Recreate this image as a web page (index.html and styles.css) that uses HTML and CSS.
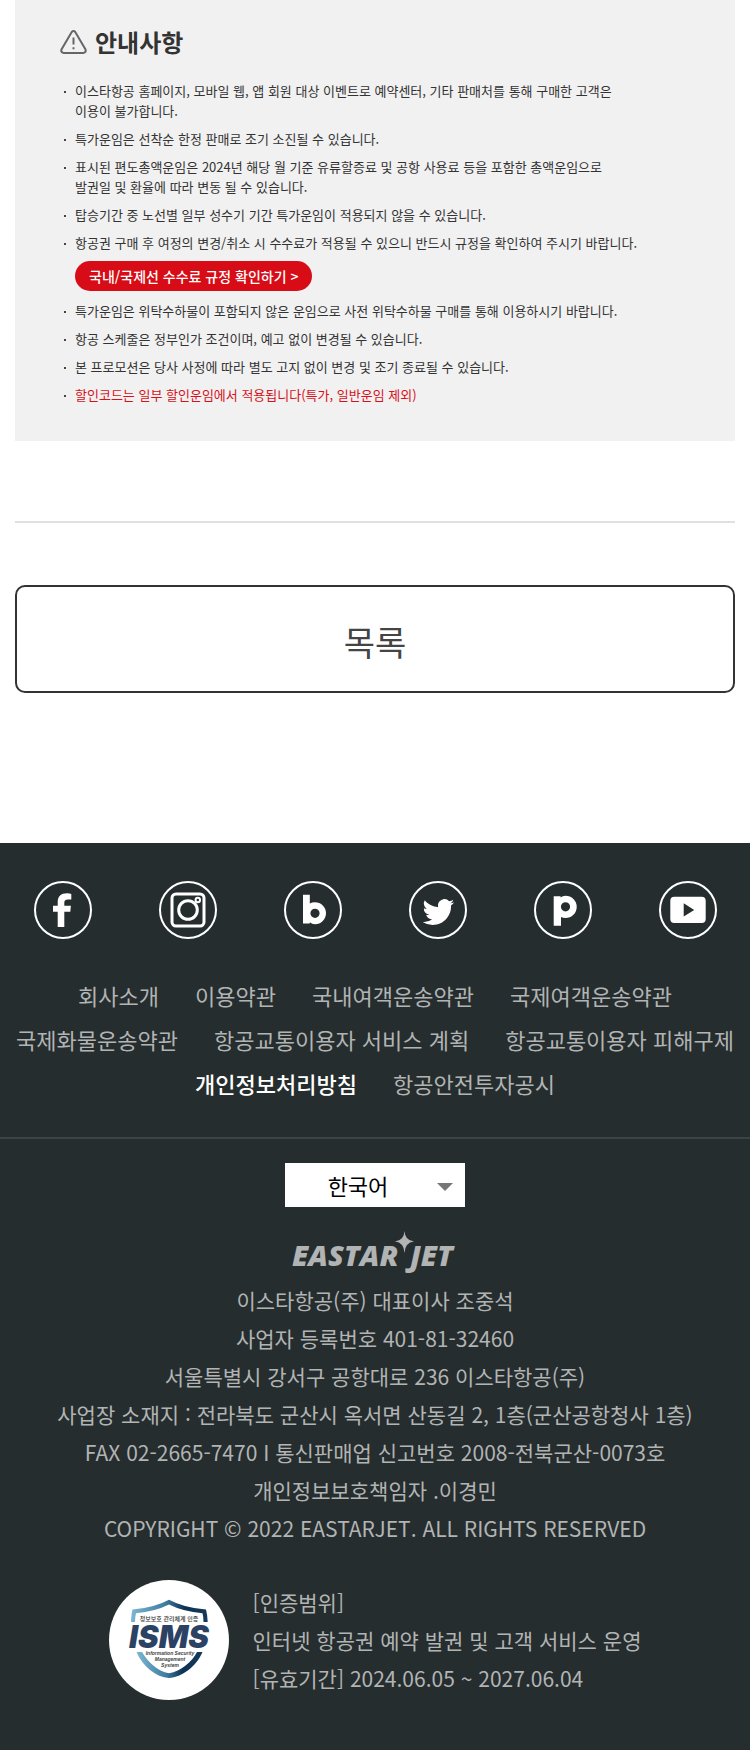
FILE: index.html
```html
<!DOCTYPE html>
<html lang="ko">
<head>
<meta charset="utf-8">
<meta name="viewport" content="width=device-width, initial-scale=1">
<title>이스타항공 이벤트</title>
<link rel="stylesheet" href="styles.css">
</head>
<body>
<main class="content">
  <section class="notice">
    <h2 class="notice-title">
      <svg class="notice-icon" width="27" height="24" viewBox="0 0 27 24" aria-hidden="true">
        <path d="M11.6 2.2Q13.5 0 15.4 2.2L25.4 19.2Q26.6 22.6 23.4 22.9H3.6Q.4 22.6 1.6 19.2Z" fill="none" stroke="#666" stroke-width="2" stroke-linejoin="round"/>
        <path d="M13.5 7.5V14.5M13.5 17.2V19.2" fill="none" stroke="#666" stroke-width="2"/>
      </svg>
      안내사항
    </h2>
    <ul class="notice-list">
      <li>이스타항공 홈페이지, 모바일 웹, 앱 회원 대상 이벤트로 예약센터, 기타 판매처를 통해 구매한 고객은<br>이용이 불가합니다.</li>
      <li>특가운임은 선착순 한정 판매로 조기 소진될 수 있습니다.</li>
      <li>표시된 편도총액운임은 2024년 해당 월 기준 유류할증료 및 공항 사용료 등을 포함한 총액운임으로<br>발권일 및 환율에 따라 변동 될 수 있습니다.</li>
      <li>탑승기간 중 노선별 일부 성수기 기간 특가운임이 적용되지 않을 수 있습니다.</li>
      <li>항공권 구매 후 여정의 변경/취소 시 수수료가 적용될 수 있으니 반드시 규정을 확인하여 주시기 바랍니다.
        <a class="fee-link" href="#">국내/국제선 수수료 규정 확인하기 &gt;</a></li>
      <li>특가운임은 위탁수하물이 포함되지 않은 운임으로 사전 위탁수하물 구매를 통해 이용하시기 바랍니다.</li>
      <li>항공 스케줄은 정부인가 조건이며, 예고 없이 변경될 수 있습니다.</li>
      <li>본 프로모션은 당사 사정에 따라 별도 고지 없이 변경 및 조기 종료될 수 있습니다.</li>
      <li><span class="warn">할인코드는 일부 할인운임에서 적용됩니다(특가, 일반운임 제외)</span></li>
    </ul>
  </section>
  <hr class="divider">
  <button class="list-button" type="button">목록</button>
</main>

<footer class="footer">
  <nav class="social" aria-label="SNS">
    <a href="#" aria-label="Facebook">
      <svg class="social-icon" viewBox="0 0 58 58"><circle class="ring" cx="29" cy="29" r="28"/>
        <path d="M23.7 46V30.7H19V24.7H23.7V21.5C23.7 15 27 12.3 33 12.3Q36 12.3 37.3 13V18.4H34C31 18.4 30.3 19.6 30.3 22V24.7H36.9L36.3 30.7H30.3V46Z"/></svg>
    </a>
    <a href="#" aria-label="Instagram">
      <svg class="social-icon" viewBox="0 0 58 58"><circle class="ring" cx="29" cy="29" r="28"/>
        <rect class="line" x="13" y="13" width="32" height="32" rx="4"/><circle class="line" cx="29" cy="29" r="9.3"/><circle class="ring" cx="38.8" cy="19" r="2.2"/></svg>
    </a>
    <a href="#" aria-label="Naver Blog">
      <svg class="social-icon" viewBox="0 0 58 58"><circle class="ring" cx="29" cy="29" r="28"/>
        <path fill-rule="evenodd" d="M19 13.7H25.8V22.6Q28 21.2 31 21.2A11 11 0 0 1 31 43.2Q28 43.2 25.8 41.2V42.4H19ZM31 27.7A4.6 4.6 0 1 0 31 36.9A4.6 4.6 0 1 0 31 27.7Z"/></svg>
    </a>
    <a href="#" aria-label="Twitter">
      <svg class="social-icon" viewBox="0 0 58 58"><circle class="ring" cx="29" cy="29" r="28"/>
        <path transform="translate(13.6 15.2) scale(1.32)" d="M23.95 4.57a10 10 0 0 1-2.82.77 4.96 4.96 0 0 0 2.16-2.72c-.95.55-2 .95-3.13 1.18a4.92 4.92 0 0 0-8.38 4.48C7.69 8.1 4.07 6.13 1.64 3.16a4.93 4.93 0 0 0 1.52 6.57 4.9 4.9 0 0 1-2.23-.61v.06a4.92 4.92 0 0 0 3.95 4.83 5 5 0 0 1-2.21.08 4.94 4.94 0 0 0 4.6 3.42A9.87 9.87 0 0 1 0 19.54a14 14 0 0 0 7.55 2.21c9.05 0 14-7.5 14-13.98 0-.21 0-.42-.02-.63a9.9 9.9 0 0 0 2.42-2.57z"/></svg>
    </a>
    <a href="#" aria-label="Naver Post">
      <svg class="social-icon" viewBox="0 0 58 58"><circle class="ring" cx="29" cy="29" r="28"/>
        <path fill-rule="evenodd" d="M19.7 15.2H26.6V16.6Q28.5 14.7 31.5 14.7A11.2 11.2 0 0 1 31.5 37.1Q29 37.1 27 36V44.7H19.7ZM31.5 21.2A4.6 4.6 0 1 0 31.5 30.4A4.6 4.6 0 1 0 31.5 21.2Z"/></svg>
    </a>
    <a href="#" aria-label="YouTube">
      <svg class="social-icon" viewBox="0 0 58 58"><circle class="ring" cx="29" cy="29" r="28"/>
        <path fill-rule="evenodd" d="M15.3 15.7H42.7Q46.7 15.7 46.7 19.7V37.9Q46.7 41.9 42.7 41.9H15.3Q11.3 41.9 11.3 37.9V19.7Q11.3 15.7 15.3 15.7ZM24.7 22.3V35.5L35.2 28.9Z"/></svg>
    </a>
  </nav>

  <nav class="policies" aria-label="약관">
    <div class="policy-row"><a href="#">회사소개</a><a href="#">이용약관</a><a href="#">국내여객운송약관</a><a href="#">국제여객운송약관</a></div>
    <div class="policy-row"><a href="#">국제화물운송약관</a><a href="#">항공교통이용자 서비스 계획</a><a href="#">항공교통이용자 피해구제</a></div>
    <div class="policy-row"><a class="privacy" href="#">개인정보처리방침</a><a href="#">항공안전투자공시</a></div>
  </nav>

  <div class="company">
    <div class="language">
      <select class="language-select" aria-label="언어 선택"><option>한국어</option><option>English</option></select>
    </div>
    <svg class="logo" width="168" height="38" viewBox="0 0 168 38" role="img" aria-label="EASTAR JET">
      <text x="1" y="36">EASTAR</text>
      <text x="119" y="36">JET</text>
      <path d="M113.5 1Q114 10.500 123 11.500Q114 12.500 113.500 23Q113 12.500 104 11.500Q113 10.500 113.500 1Z"/>
      <circle cx="113.500" cy="11.500" r="3"/>
    </svg>
    <address class="address">
      <p>이스타항공(주) 대표이사 조중석</p>
      <p>사업자 등록번호 401-81-32460</p>
      <p>서울특별시 강서구 공항대로 236 이스타항공(주)</p>
      <p>사업장 소재지 : 전라북도 군산시 옥서면 산동길 2, 1층(군산공항청사 1층)</p>
      <p>FAX 02-2665-7470 I 통신판매업 신고번호 2008-전북군산-0073호</p>
      <p>개인정보보호책임자 .이경민</p>
      <p>COPYRIGHT © 2022 EASTARJET. ALL RIGHTS RESERVED</p>
    </address>
    <div class="certificate">
      <svg class="isms" width="120" height="120" viewBox="0 0 120 120" role="img" aria-label="ISMS 인증">
        <defs>
          <linearGradient id="shield" x1="0" x2="1" y1="0" y2="0"><stop offset="0" stop-color="#7cb7d2"/><stop offset=".45" stop-color="#3f7c9f"/><stop offset=".7" stop-color="#0d3254"/><stop offset="1" stop-color="#17395a"/></linearGradient>
        </defs>
        <circle cx="60" cy="60" r="60" fill="#fff"/>
        <path d="M22 42Q22.300 34 23.500 29.500Q45 28 60 19.800Q75 28 97 29.500Q98.500 35 98.700 42H94.500Q94.500 37 93.500 33.300Q74 31.500 60 24.500Q46 31.500 27 33.300Q26 37 26 42Z" fill="url(#shield)"/>
        <path d="M27.500 72H33C39 82 48 91 60 93.300C72 91 83 82 88 72H93.500C87 87 73 97 60 98C47 97 34 87 27.500 72Z" fill="url(#shield)"/>
        <text class="isms-ko" x="60" y="41" text-anchor="middle">정보보호 관리체계 인증</text>
        <text class="isms-name" x="60" y="68" text-anchor="middle">ISMS</text>
        <g class="isms-en" text-anchor="middle"><text x="61" y="75">Information Security</text><text x="61" y="81">Management</text><text x="61" y="87">System</text></g>
      </svg>
      <div class="certificate-text">
        <p>[인증범위]</p>
        <p>인터넷 항공권 예약 발권 및 고객 서비스 운영</p>
        <p>[유효기간] 2024.06.05 ~ 2027.06.04</p>
      </div>
    </div>
  </div>
</footer>
</body>
</html>
```

FILE: styles.css
```css
* { box-sizing: border-box; }

body {
  margin: 0;
  background: #fff;
  color: #333;
  font-family: "Noto Sans CJK KR", "Noto Sans", sans-serif;
}

p { margin: 0; }
a { color: inherit; text-decoration: none; }

.content { padding: 0 15px 150px; }

.notice {
  padding: 25px 45px 36px;
  background: #f1f1f1;
}

.notice-title {
  display: flex;
  align-items: center;
  gap: 8px;
  margin: 0 0 22px;
  font-size: 24px;
  font-weight: 700;
  line-height: 34px;
}

.notice-list {
  display: flex;
  flex-direction: column;
  gap: 8px;
  margin: 0;
  padding: 0;
  list-style: none;
  font-size: 13px;
  line-height: 20px;
}

.notice-list li {
  position: relative;
  padding-left: 15px;
}

.notice-list li::before {
  content: "";
  position: absolute;
  left: 4px;
  top: 10px;
  width: 2px;
  height: 2px;
  background: #444;
}

.warn { color: #d7101a; }

.fee-link {
  display: block;
  width: fit-content;
  margin: 8px 0 2px;
  padding: 0 14px;
  border-radius: 15px;
  background: #d70c16;
  color: #fff;
  font-size: 14px;
  font-weight: 500;
  line-height: 30px;
}

.divider {
  margin: 80px 0 62px;
  border: 0;
  border-top: 2px solid #e0e0e0;
}

.list-button {
  display: block;
  width: 100%;
  height: 108px;
  padding: 4px 0 0;
  border: 2px solid #333;
  border-radius: 10px;
  background: #fff;
  color: #444;
  font-family: inherit;
  font-size: 34px;
}

.footer {
  padding: 38px 0 50px;
  background: #252d2e;
  color: #b2b4b4;
  font-size: 22px;
}

.social {
  display: grid;
  grid-template-columns: repeat(6, 1fr);
  justify-items: center;
}

.social-icon {
  display: block;
  width: 58px;
  height: 58px;
  fill: #fff;
}

.ring { fill: none; stroke: #fff; stroke-width: 2; }
.line { fill: none; stroke: #fff; stroke-width: 3; }

.policies {
  padding: 34px 0 32px;
  border-bottom: 2px solid #3b4344;
  line-height: 44px;
}

.policy-row {
  display: flex;
  flex-wrap: wrap;
  justify-content: center;
  column-gap: 36px;
}

.privacy { color: #fff; font-weight: 500; }

.company {
  display: flex;
  flex-direction: column;
  align-items: center;
  padding-top: 24px;
}

.language { position: relative; width: 180px; }

.language::after {
  content: "";
  position: absolute;
  right: 12px;
  top: 20px;
  border: 8px solid transparent;
  border-top-color: #777;
  border-bottom: 0;
  pointer-events: none;
}

.language-select {
  display: block;
  width: 100%;
  height: 44px;
  padding: 0 34px 0 0;
  border: 0;
  border-radius: 0;
  background: #fff;
  color: #000;
  font-family: inherit;
  font-size: 22px;
  text-align-last: center;
  appearance: none;
}

.logo {
  overflow: visible;
  margin: 23px 0 13px;
  fill: #b2b4b4;
  font: italic 800 29px "Open Sans", "Noto Sans", sans-serif;
}

.address {
  font-size: 21px;
  font-style: normal;
  line-height: 38px;
  text-align: center;
}

.certificate {
  display: flex;
  align-items: center;
  gap: 24px;
  margin-top: 33px;
  font-size: 21px;
  line-height: 38px;
}

.isms { flex: none; }
.isms-ko { font-size: 6px; font-weight: 500; fill: #333; }
.isms-name { font: italic 900 31px Inter, sans-serif; fill: #2c4264; }
.isms-en { font: italic 700 5px "Liberation Sans", sans-serif; fill: #444; }
```
